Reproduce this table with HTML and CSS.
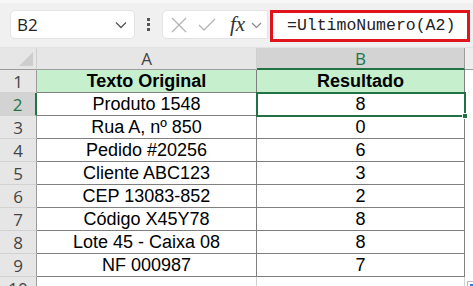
FILE: index.html
```html
<!DOCTYPE html>
<html lang="pt">
<head>
<meta charset="utf-8">
<link rel="stylesheet" href="styles.css">
</head>
<body>
<div class="toolbar">
  <div class="namebox">
    <span class="ref">B2</span>
    <svg class="chev" width="12" height="8" viewBox="0 0 12 8"><path d="M1 1.5 L6 6.5 L11 1.5" fill="none" stroke="#555" stroke-width="1.3"/></svg>
  </div>
  <div class="dots"><i></i><i></i><i></i></div>
  <div class="fbox">
    <svg class="ico" width="18" height="18" viewBox="0 0 18 18"><path d="M2 2 L16 16 M16 2 L2 16" stroke="#b4b4b4" stroke-width="1.3" fill="none"/></svg>
    <svg class="ico" width="18" height="14" viewBox="0 0 18 14"><path d="M1 7 L6 12 L17 1" stroke="#b4b4b4" stroke-width="1.3" fill="none"/></svg>
    <span class="fx">fx</span>
    <svg class="chev2" width="11" height="7" viewBox="0 0 11 7"><path d="M1 1 L5.5 5.5 L10 1" fill="none" stroke="#888" stroke-width="1.2"/></svg>
  </div>
  <div class="formula">=UltimoNumero(A2)</div>
</div>
<div class="grid">
  <div class="corner"><span class="tri"></span></div>
  <div class="ch">A</div>
  <div class="ch sel">B</div>
  <div class="ch rest"></div>

  <div class="rh">1</div><div class="c hd">Texto Original</div><div class="c hd">Resultado</div><div class="c rest"></div>
  <div class="rh sel">2</div><div class="c">Produto 1548</div><div class="c active">8<span class="handle"></span></div><div class="c rest"></div>
  <div class="rh">3</div><div class="c">Rua A, nº 850</div><div class="c">0</div><div class="c rest"></div>
  <div class="rh">4</div><div class="c">Pedido #20256</div><div class="c">6</div><div class="c rest"></div>
  <div class="rh">5</div><div class="c">Cliente ABC123</div><div class="c">3</div><div class="c rest"></div>
  <div class="rh">6</div><div class="c">CEP 13083-852</div><div class="c">2</div><div class="c rest"></div>
  <div class="rh">7</div><div class="c">Código X45Y78</div><div class="c">8</div><div class="c rest"></div>
  <div class="rh">8</div><div class="c">Lote 45 - Caixa 08</div><div class="c">8</div><div class="c rest"></div>
  <div class="rh">9</div><div class="c">NF 000987</div><div class="c">7</div><div class="c rest"></div>
  <div class="rh last">10</div><div class="c blank"></div><div class="c blank"></div><div class="c rest"><span class="qa"></span></div>
</div>
</body>
</html>
```
FILE: styles.css
```css
* { box-sizing: border-box; }
html, body { margin: 0; padding: 0; }
body {
  width: 473px;
  height: 286px;
  overflow: hidden;
  background: #fff;
  font-family: "Liberation Sans", Arial, sans-serif;
}
.toolbar {
  height: 48px;
  background: #f0f0f0;
  border-top: 3px solid #f7f7f7;
  border-bottom: 1px solid #e2e2e2;
  display: flex;
  align-items: flex-start;
  padding: 7px 0 0 10px;
  position: relative;
}
.namebox {
  width: 125px;
  height: 29px;
  background: #fff;
  border: 1px solid #e3e3e3;
  border-radius: 5px;
  display: flex;
  align-items: center;
  justify-content: space-between;
  padding: 0 7px 0 6px;
}
.ref {
  font-family: "Open Sans", "Noto Sans", sans-serif;
  font-size: 17px;
  color: #222;
}
.dots {
  width: 27px;
  height: 29px;
  display: flex;
  flex-direction: column;
  align-items: center;
  justify-content: center;
  gap: 2px;
}
.dots i {
  display: block;
  width: 3px;
  height: 3px;
  background: #555;
}
.fbox {
  width: 106px;
  height: 29px;
  background: #fff;
  border: 1px solid #e3e3e3;
  border-radius: 5px 0 0 5px;
  display: flex;
  align-items: center;
  padding-left: 7px;
}
.fbox .ico { margin-right: 10px; }
.fx {
  font-family: "Liberation Serif", "DejaVu Serif", serif;
  font-style: italic;
  font-size: 21px;
  color: #333;
  margin-left: 4px;
  margin-right: 6px;
  line-height: 1;
}
.chev2 { margin-top: 2px; }
.formula {
  position: absolute;
  left: 270px;
  top: 7px;
  width: 200px;
  height: 32px;
  border: 3px solid #e0141c;
  background: #fff;
  font-family: "Liberation Mono", "DejaVu Sans Mono", monospace;
  font-size: 16.5px;
  line-height: 26px;
  color: #222;
  padding-left: 14px;
  white-space: nowrap;
}
.grid {
  display: grid;
  grid-template-columns: 37px 220px 208px 8px;
  grid-template-rows: 22px repeat(9, 23px) 9px;
}
.grid > div {
  display: flex;
  align-items: center;
  justify-content: center;
  white-space: nowrap;
  position: relative;
}
.corner {
  background: #e6e6e6;
  border-right: 1px solid #cfcfcf;
  border-bottom: 1px solid #9c9c9c;
}
.tri {
  position: absolute;
  right: 3px;
  bottom: 3px;
  width: 0;
  height: 0;
  border-left: 14px solid transparent;
  border-bottom: 14px solid #cdcdcd;
}
.ch {
  background: #e6e6e6;
  border-right: 1px solid #cfcfcf;
  border-bottom: 1px solid #9c9c9c;
  font-family: "Open Sans", "Noto Sans", sans-serif;
  font-size: 17px;
  color: #444;
}
.ch.sel {
  background: #d3d3d3;
  color: #217346;
  border-bottom: 2px solid #217346;
  border-right: 1px solid #9c9c9c;
}
.ch.rest { background: #eeeeee; border-right: none; }
.rh {
  background: #e6e6e6;
  border-right: 1px solid #9c9c9c;
  border-bottom: 1px solid #d2d2d2;
  font-family: "Open Sans", "Noto Sans", sans-serif;
  font-size: 17px;
  color: #444;
}
.rh.last {
  align-items: flex-start;
  overflow: hidden;
  border-bottom: none;
  line-height: 23px;
}
.rh.sel {
  background: #d3d3d3;
  color: #217346;
  border-right: 2px solid #217346;
}
.c {
  border-right: 1px solid #7f7f7f;
  border-bottom: 1px solid #7f7f7f;
  font-size: 18px;
  color: #000;
}
.c.hd {
  background: #c6efce;
  font-weight: bold;
}
.c.rest { border-right: none; border-bottom: none; background: #fff; }
.c.blank { border-bottom: none; border-right: 1px solid #d2d2d2; }
.c.active {
  outline: 2px solid #217346;
  outline-offset: -1px;
  z-index: 2;
}
.handle {
  position: absolute;
  right: -4px;
  bottom: -4px;
  width: 6px;
  height: 6px;
  background: #217346;
  border: 1px solid #fff;
}
.qa {
  position: absolute;
  left: 2px;
  top: 4px;
  width: 8px;
  height: 8px;
  border: 1px solid #bbb;
  background: #fff;
}
.qa::after {
  content: "";
  position: absolute;
  left: 2px;
  top: 2px;
  width: 3px;
  height: 3px;
  background: #3b78d8;
}
```
